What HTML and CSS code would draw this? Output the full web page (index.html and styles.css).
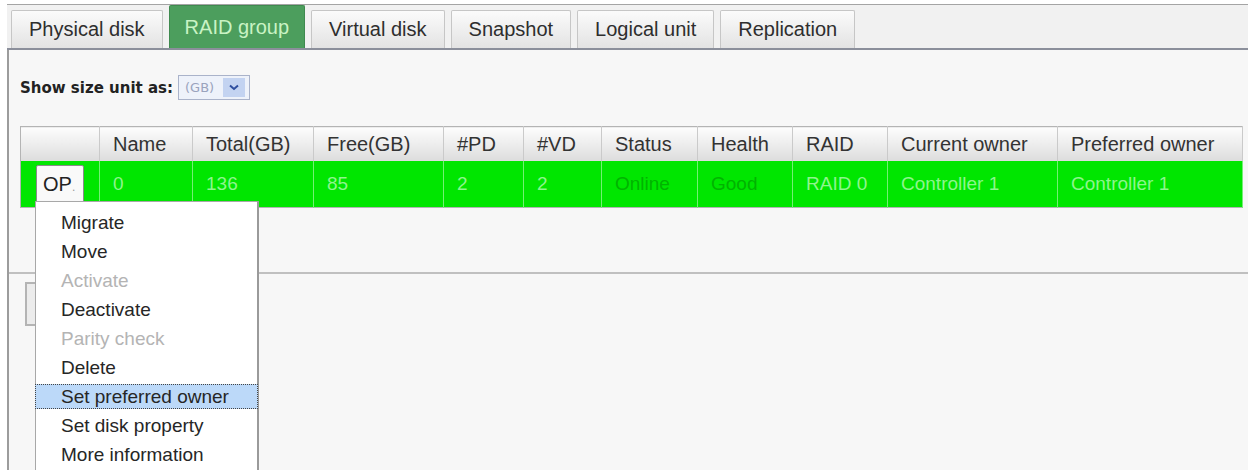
FILE: index.html
```html
<!DOCTYPE html>
<html>
<head>
<meta charset="utf-8">
<link rel="stylesheet" href="styles.css">
</head>
<body>
<div class="page">
  <div class="panel">
    <div class="tabs">
      <div class="tab">Physical disk</div>
      <div class="tab active">RAID group</div>
      <div class="tab">Virtual disk</div>
      <div class="tab">Snapshot</div>
      <div class="tab">Logical unit</div>
      <div class="tab">Replication</div>
    </div>
    <div class="content">
      <div class="unit-row">
        <span class="unit-label">Show size unit as:</span>
        <span class="select">
          <span class="select-value">(GB)</span>
          <span class="select-btn">
            <svg width="10" height="7" viewBox="0 0 10 7"><path d="M1 1.5 L5 5 L9 1.5" fill="none" stroke="#2f4f9f" stroke-width="2"/></svg>
          </span>
        </span>
      </div>
      <table class="grid">
        <colgroup>
          <col style="width:79px"><col style="width:93px"><col style="width:121px"><col style="width:130px"><col style="width:80px"><col style="width:78px"><col style="width:96px"><col style="width:95px"><col style="width:95px"><col style="width:170px"><col style="width:185px">
        </colgroup>
        <thead>
          <tr>
            <th></th><th>Name</th><th>Total(GB)</th><th>Free(GB)</th><th>#PD</th><th>#VD</th><th>Status</th><th>Health</th><th>RAID</th><th>Current owner</th><th>Preferred owner</th>
          </tr>
        </thead>
        <tbody>
          <tr class="row-ok">
            <td class="op-cell"><span class="op-btn">OP<span class="op-dot">.</span></span></td>
            <td>0</td><td>136</td><td>85</td><td>2</td><td>2</td>
            <td class="state">Online</td><td class="state">Good</td>
            <td>RAID 0</td><td>Controller 1</td><td>Controller 1</td>
          </tr>
        </tbody>
      </table>
    </div>
    <div class="divider"></div>
    <div class="actions">
      <span class="action-btn"></span>
    </div>
  </div>

  <div class="menu">
    <div class="item">Migrate</div>
    <div class="item">Move</div>
    <div class="item disabled">Activate</div>
    <div class="item">Deactivate</div>
    <div class="item disabled">Parity check</div>
    <div class="item">Delete</div>
    <div class="item selected">Set preferred owner</div>
    <div class="item">Set disk property</div>
    <div class="item">More information</div>
  </div>
</div>
</body>
</html>
```

FILE: styles.css
```css
html, body {
  margin: 0;
  padding: 0;
  background: #ffffff;
  overflow: hidden;
}
body {
  font-family: "Liberation Sans", Arial, sans-serif;
  color: #2b2b2b;
}
.page {
  position: relative;
  width: 1248px;
  height: 470px;
  padding-top: 4px;
  box-sizing: border-box;
}
.panel {
  margin-left: 7px;
  height: 466px;
  background: #f7f7f7;
  border-left: 2px solid #9c9c9c;
}
.tabs {
  display: flex;
  align-items: flex-end;
  gap: 6px;
  height: 43px;
  background: #f1f1f1;
  border-top: 1px solid #a4a4a4;
  border-bottom: 2px solid #8b8f9b;
  margin-left: -2px;
  padding-left: 4px;
}
.tab {
  height: 38px;
  box-sizing: border-box;
  padding: 0 17px;
  display: flex;
  align-items: center;
  font-size: 20px;
  color: #2e2e2e;
  background: linear-gradient(#fbfbfb, #e3e3e3);
  border: 1px solid #c6c6c6;
  border-bottom: none;
  border-radius: 2px 2px 0 0;
}
.tab.active {
  height: 43px;
  padding: 0 15px;
  background: #4c9e5d;
  border-color: #3f8a4f;
  color: #c9f3c4;
}
.content {
  padding: 25px 0 0 11px;
}
.unit-row {
  display: flex;
  align-items: center;
  gap: 5px;
  height: 25px;
}
.unit-label {
  font-family: "DejaVu Sans", Verdana, sans-serif;
  font-weight: bold;
  font-size: 15px;
  color: #222;
}
.select {
  display: flex;
  align-items: center;
  width: 72px;
  height: 25px;
  box-sizing: border-box;
  border: 1px solid #aab3ca;
  background: #eef2fa;
  padding: 0 4px 0 6px;
  justify-content: space-between;
}
.select-value {
  font-family: "DejaVu Sans", Verdana, sans-serif;
  font-size: 13px;
  color: #9aa3bd;
}
.select-btn {
  width: 22px;
  height: 19px;
  background: #c3d3f1;
  display: flex;
  align-items: center;
  justify-content: center;
}
.grid {
  margin-top: 26px;
  border-collapse: collapse;
  table-layout: fixed;
  width: 1222px;
  border: 1px solid #b4b4b4;
}
.grid th {
  height: 34px;
  padding: 0 0 0 13px;
  text-align: left;
  font-weight: normal;
  font-size: 20px;
  color: #333;
  background: linear-gradient(#fdfdfd, #dcdcdc);
  border-right: 1px solid #cacaca;
  white-space: nowrap;
}
.grid td {
  height: 46px;
  padding: 0 0 0 13px;
  font-size: 19px;
  color: #8ef58e;
  background: #00e600;
  border-right: 1px solid #74f074;
  white-space: nowrap;
}
.grid td.state {
  color: #00b300;
}
.grid td.op-cell {
  padding-left: 15px;
}
.op-btn {
  display: inline-flex;
  align-items: center;
  height: 38px;
  width: 48px;
  box-sizing: border-box;
  padding-left: 6px;
  background: #f9f9f9;
  border: 1px solid #8a8a8a;
  border-radius: 2px;
  font-size: 20px;
  color: #222;
  vertical-align: middle;
}
.op-dot {
  font-size: 12px;
  color: #999;
  align-self: flex-end;
  padding-bottom: 8px;
}
.divider {
  margin-top: 64px;
  border-top: 2px solid #c0c0c0;
}
.actions {
  padding: 8px 0 0 16px;
}
.action-btn {
  display: inline-block;
  width: 120px;
  height: 44px;
  box-sizing: border-box;
  border: 2px solid #b4b4b4;
  background: #ececec;
}
.menu {
  position: absolute;
  left: 35px;
  top: 201px;
  width: 224px;
  height: 290px;
  box-sizing: border-box;
  background: #ffffff;
  border: 1px solid #a8a8a8;
  border-right: 2px solid #9a9a9a;
  padding-top: 8px;
  display: flex;
  flex-direction: column;
  gap: 4px;
}
.item {
  height: 25px;
  box-sizing: border-box;
  line-height: 23px;
  padding-left: 25px;
  font-size: 19px;
  color: #262626;
  white-space: nowrap;
  border: 1px solid transparent;
  margin: 0 -1px;
}
.item.disabled {
  color: #b4b4b4;
}
.item.selected {
  background: #bcd9f9;
  border: 1px dotted #444;
}
```
